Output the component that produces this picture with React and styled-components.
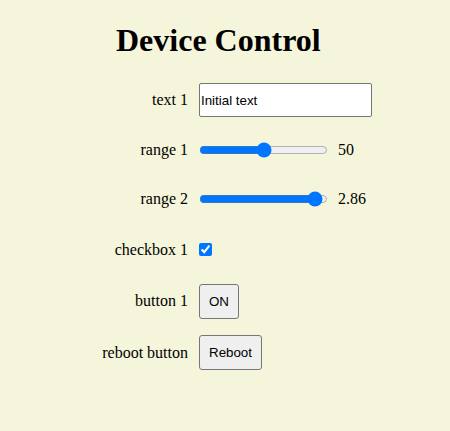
import React, { useState } from "react";
import styled, { createGlobalStyle } from "styled-components";

const Global = createGlobalStyle`
  html, body { background: #f5f5dc; }
  body { margin: 8px; font-family: "Liberation Serif", "Times New Roman", serif; font-size: 16px; color: #000; }
`;

const Panel = styled.main`
  width: 271px;
  margin-left: 93px;
`;

const Title = styled.h1`
  font-family: "Liberation Serif", "Times New Roman", serif;
  font-size: 32px;
  font-weight: bold;
  margin: 14px 0 16px 15px;
`;

const Grid = styled.div`
  display: grid;
  grid-template-columns: 87px auto;
  grid-template-rows: 50px 49px 50px 51px 52px 51px;
  column-gap: 11px;
  align-items: center;
`;

const Label = styled.label`
  text-align: right;
  white-space: nowrap;
`;

const Cell = styled.div`
  display: flex;
  align-items: center;
  gap: 10px;
`;

const TextInput = styled.input`
  box-sizing: border-box;
  width: 173px;
  height: 34px;
  padding: 1px 1px;
  margin: 0;
  font-family: "Liberation Sans", Arial, sans-serif;
  font-size: 13.33px;
  border: 1px solid #767676;
  border-radius: 2px;
  background: #fff;
`;

const Range = styled.input`
  width: 129px;
  margin: 0;
  accent-color: #0075ff;
`;

const Value = styled.span`
  font-size: 16px;
`;

const Check = styled.input`
  width: 13px;
  height: 13px;
  margin: 0;
`;

const Button = styled.button`
  box-sizing: border-box;
  height: 35px;
  font-family: "Liberation Sans", Arial, sans-serif;
  font-size: 13.33px;
  line-height: 15px;
  padding: 0 9px;
  margin: 0;
  background: #efefef;
  border: 1px solid #767676;
  border-radius: 3px;
  color: #000;
`;

export default function App() {
  const [text, setText] = useState("Initial text");
  const [r1, setR1] = useState(50);
  const [r2, setR2] = useState(2.86);
  const [on, setOn] = useState(true);
  const [checked, setChecked] = useState(true);
  return (
    <>
      <Global />
      <Panel>
        <Title>Device Control</Title>
        <Grid>
          <Label>text 1</Label>
          <Cell>
            <TextInput value={text} onChange={(e) => setText(e.target.value)} />
          </Cell>
          <Label>range 1</Label>
          <Cell>
            <Range type="range" min="0" max="100" value={r1} onChange={(e) => setR1(e.target.value)} />
            <Value>{r1}</Value>
          </Cell>
          <Label>range 2</Label>
          <Cell>
            <Range type="range" min="0" max="3" step="0.01" value={r2} onChange={(e) => setR2(e.target.value)} />
            <Value>{r2}</Value>
          </Cell>
          <Label>checkbox 1</Label>
          <Cell>
            <Check type="checkbox" checked={checked} onChange={(e) => setChecked(e.target.checked)} />
          </Cell>
          <Label>button 1</Label>
          <Cell>
            <Button onClick={() => setOn(!on)}>{on ? "ON" : "OFF"}</Button>
          </Cell>
          <Label>reboot button</Label>
          <Cell>
            <Button>Reboot</Button>
          </Cell>
        </Grid>
      </Panel>
    </>
  );
}
